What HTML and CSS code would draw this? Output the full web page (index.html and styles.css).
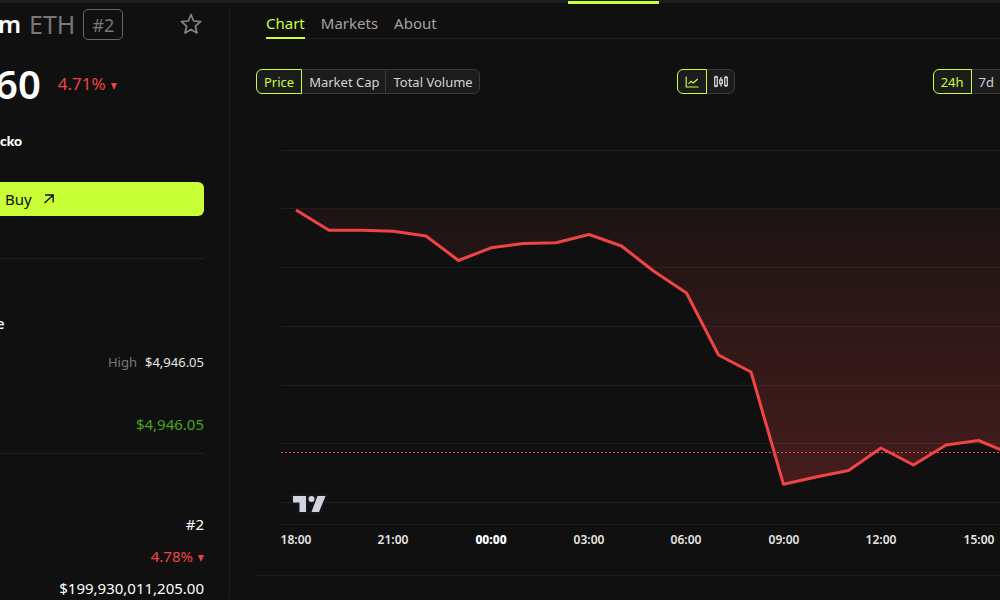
FILE: index.html
```html
<!DOCTYPE html>
<html lang="en">
<head>
    <meta charset="UTF-8">
    <meta name="viewport" content="width=device-width, initial-scale=1.0">
    <title>ETH</title>
    <link rel="stylesheet" href="styles.css">
</head>
<body>
    <header class="topbar"><div class="topbar-active"></div></header>

    <div class="layout">
        <aside class="sidebar">
            <div class="coin-title">
                <h1 class="coin-name">m</h1>
                <span class="coin-symbol">ETH</span>
                <span class="coin-rank">#2</span>
                <button class="star" type="button" aria-label="Favourite">
                    <svg width="22" height="22" viewBox="0 0 22 22">
                        <path d="M11 1.6 L13.7 8 L20.6 8.6 L15.4 13.2 L17 20 L11 16.4 L5 20 L6.6 13.2 L1.4 8.6 L8.3 8 Z" fill="none" stroke="#858585" stroke-width="1.7" stroke-linejoin="round"/>
                    </svg>
                </button>
            </div>
            <div class="coin-price">
                <span class="price">60</span>
                <span class="change">4.71%<i class="down"></i></span>
            </div>
            <div class="source">cko</div>
            <button class="buy" type="button">
                Buy
                <svg width="12" height="12" viewBox="0 0 12 12">
                    <path d="M1.5 10 L10 2.2 M2 2 H10.2 V9.4" fill="none" stroke="#101010" stroke-width="1.4"/>
                </svg>
            </button>

            <section class="block range">
                <h2 class="block-title">e</h2>
                <div class="high"><span class="label">High</span><span>$4,946.05</span></div>
                <div class="ath">$4,946.05</div>
            </section>

            <section class="block stats">
                <div class="stat">#2</div>
                <div class="stat change">4.78%<i class="down"></i></div>
                <div class="stat">$199,930,011,205.00</div>
            </section>
        </aside>

        <main class="content">
            <nav class="tabs">
                <a class="tab active" href="#chart">Chart</a>
                <a class="tab" href="#markets">Markets</a>
                <a class="tab" href="#about">About</a>
            </nav>

            <div class="toolbar">
                <div class="group">
                    <button class="seg active" type="button">Price</button>
                    <button class="seg" type="button">Market Cap</button>
                    <button class="seg" type="button">Total Volume</button>
                </div>
                <div class="group">
                    <button class="seg active" type="button" aria-label="Line">
                        <svg width="14" height="14" viewBox="0 0 14 14">
                            <path d="M1.2 1.5 V12 H13.5 M3.6 8.8 L6 6.2 L8.2 7.9 L12.8 4" fill="none" stroke="currentColor" stroke-width="1.2"/>
                        </svg>
                    </button>
                    <button class="seg" type="button" aria-label="Candles">
                        <svg width="14" height="14" viewBox="0 0 14 14">
                            <path d="M2 .8 V2 M2 11 V12.2 M7 2 V5 M7 8.5 V11.5 M12 .8 V2.5 M12 10.5 V12" stroke="currentColor" stroke-width="1.4"/>
                            <path d="M.7 2 H3.3 V11 H.7 Z M5.7 5 H8.3 V8.5 H5.7 Z M10.7 2.5 H13.3 V10.5 H10.7 Z" fill="none" stroke="currentColor" stroke-width="1.3"/>
                        </svg>
                    </button>
                </div>
                <div class="group open">
                    <button class="seg active" type="button">24h</button>
                    <button class="seg" type="button">7d</button>
                </div>
            </div>

            <div class="chart">
                <svg width="100%" height="410" role="img" aria-label="ETH price, 24 hours">
                    <defs>
                        <linearGradient id="loss" gradientUnits="userSpaceOnUse" x1="0" y1="69" x2="0" y2="344">
                            <stop offset="0" stop-color="#ef4444" stop-opacity=".06"/>
                            <stop offset="1" stop-color="#ef4444" stop-opacity=".24"/>
                        </linearGradient>
                    </defs>
                    <!-- grid -->
                    <g class="grid">
                        <rect y="10" width="100%" height="1"/>
                        <rect y="68" width="100%" height="1"/>
                        <rect y="127" width="100%" height="1"/>
                        <rect y="186" width="100%" height="1"/>
                        <rect y="245" width="100%" height="1"/>
                        <rect y="303" width="100%" height="1"/>
                        <rect y="362" width="100%" height="1"/>
                        <rect y="384" width="100%" height="1"/>
                    </g>
                    <!-- area and line -->
                    <path fill="url(#loss)" d="M15 69 V70 L48 90 L80 90 L112 91 L145 96 L177 120 L210 108 L242 103 L275 103 L308 94 L340 106 L372 131 L405 153 L437 215 L470 232 L502 344 L535 337 L568 330 L600 308 L632 325 L665 305 L698 300 L730 314 V69 Z"/>
                    <line class="last" x1="0" y1="312.5" x2="100%" y2="312.5"/>
                    <polyline class="line" points="15,70 48,90.3 80.5,90.3 112.5,91.3 145,96 177.5,120.5 210,107.8 242.5,103.5 275,102.8 308,94.5 340.5,106 372.5,131 405.5,153 437.5,215 470,232 502.5,344.3 535,337 567.5,330.5 600,308 632.5,325 665,305 697.5,300.5 730,314"/>
                    <!-- tradingview mark -->
                    <path fill="#d1d4dc" stroke="#131722" stroke-width="4" paint-order="stroke" d="M12 356 H25 V372 H18.5 V362.5 H12 Z M36.5 356 H44.5 L38 372 H30.5 Z M30.5 359 m-3 0 a3 3 0 1 0 6 0 a3 3 0 1 0 -6 0"/>
                    <g class="axis">
                        <text x="15" y="404">18:00</text>
                        <text x="112" y="404">21:00</text>
                        <text class="day" x="210" y="404">00:00</text>
                        <text x="308" y="404">03:00</text>
                        <text x="405" y="404">06:00</text>
                        <text x="503" y="404">09:00</text>
                        <text x="600" y="404">12:00</text>
                        <text x="698" y="404">15:00</text>
                    </g>
                </svg>
            </div>
        </main>
    </div>
</body>
</html>
```
FILE: styles.css
```css
* {
    box-sizing: border-box;
}

body {
    margin: 0;
    min-height: 100vh;
    background: #101010;
    color: #fff;
    font-family: "Noto Sans", sans-serif;
    font-size: 15px;
    line-height: 20px;
    overflow: hidden;
}

button {
    font: inherit;
    color: inherit;
    cursor: pointer;
}

h1, h2 {
    margin: 0;
}

.topbar {
    height: 3px;
    background: #1c1c1c;
}

.topbar-active {
    width: 91px;
    height: 4px;
    margin-left: 568px;
    border-bottom: 3px solid #c8ff36;
}

.layout {
    display: flex;
    align-items: stretch;
}

/* sidebar */
.sidebar {
    flex: none;
    width: 230px;
    margin-top: 5px;
    padding-right: 25px;
    border-right: 1px solid #1c1c1c;
    overflow: hidden;
}

.coin-title {
    display: flex;
    align-items: center;
    height: 32px;
    margin-left: -2px;
}

.coin-name {
    font-size: 24px;
    font-weight: 600;
}

.coin-symbol {
    margin-left: 8px;
    font-size: 25px;
    color: #777;
}

.coin-rank {
    height: 31px;
    margin-left: 8px;
    padding: 5px 8px;
    border: 1px solid #666;
    border-radius: 5px;
    font-size: 18px;
    color: #777;
}

.star {
    display: flex;
    margin-left: auto;
    padding: 0 2px;
    border: 0;
    background: none;
}

.coin-price {
    display: flex;
    align-items: center;
    height: 48px;
    margin: 20px 0 0 -5px;
}

.price {
    font-size: 40px;
    font-weight: 600;
}

.change {
    display: flex;
    align-items: center;
    color: #ef4444;
}

.coin-price .change {
    margin-left: 17px;
    font-size: 17px;
}

.down {
    margin: 5px 0 0 5px;
    border: 3px solid transparent;
    border-top: 7px solid #ef4444;
    border-bottom: 0;
}

.source {
    margin-top: 23px;
    font-family: Lato, sans-serif;
    font-size: 14px;
    font-weight: 900;
}

.buy {
    display: flex;
    align-items: center;
    gap: 11px;
    width: 100%;
    height: 34px;
    margin-top: 31px;
    padding: 0 5px;
    border: 0;
    border-radius: 0 6px 6px 0;
    background: #c8ff36;
    color: #101010;
}

.block {
    border-top: 1px solid #1e1e1e;
    text-align: right;
}

.range {
    height: 195px;
    margin-top: 42px;
    padding-top: 54px;
}

.block-title {
    margin-left: -4px;
    font-size: 15px;
    font-weight: 500;
    text-align: left;
}

.high {
    display: flex;
    justify-content: flex-end;
    gap: 8px;
    margin-top: 19px;
    font-size: 13px;
}

.high span:last-child {
    color: #e5e5e5;
}

.high .label {
    color: #777;
}

.ath {
    margin-top: 42px;
    color: #43a516;
}

.stats {
    display: flex;
    flex-direction: column;
    gap: 12px;
    padding-top: 60px;
}

.stat {
    justify-content: flex-end;
}

/* main column */
.content {
    flex: 1;
    min-width: 0;
    padding-left: 26px;
}

.tabs {
    display: flex;
    gap: 16px;
    height: 36px;
    margin-left: 10px;
    padding-top: 10px;
    border-bottom: 1px solid #1e1e1e;
}

.tab {
    height: 26px;
    color: #a3a3a3;
    text-decoration: none;
}

.tab.active {
    color: #c8ff36;
    border-bottom: 2px solid #c8ff36;
}

.toolbar {
    display: flex;
    justify-content: space-between;
    margin-top: 30px;
}

.group {
    display: flex;
}

.seg {
    display: flex;
    align-items: center;
    height: 25px;
    margin-left: -1px;
    padding: 0 7px;
    border: 1px solid #3a3a3a;
    background: #1c1c1c;
    color: #d4d4d4;
    font-size: 13px;
}

.seg + .seg {
    padding: 0 6px 0 7px;
}

.seg:first-child {
    margin-left: 0;
    border-radius: 6px 0 0 6px;
}

.seg:last-child {
    border-radius: 0 6px 6px 0;
}

.seg.active {
    position: relative;
    border-color: #c8ff36;
    color: #c8ff36;
}

.open .seg:last-child {
    border-right: 0;
    border-radius: 0;
}

.chart {
    margin-top: 46px;
    padding: 0 0 25px 25px;
    border-bottom: 1px solid #1e1e1e;
}

.chart svg {
    display: block;
}

.grid {
    fill: #1e1e1e;
}

.line {
    fill: none;
    stroke: #ef4444;
    stroke-width: 3;
    stroke-linejoin: round;
}

.last {
    stroke: #ef4444;
    stroke-dasharray: 2 2;
}

.axis {
    fill: #e5e5e5;
    font-size: 12px;
    font-weight: 600;
    text-anchor: middle;
}

.day {
    fill: #fff;
    font-weight: 800;
}
```
